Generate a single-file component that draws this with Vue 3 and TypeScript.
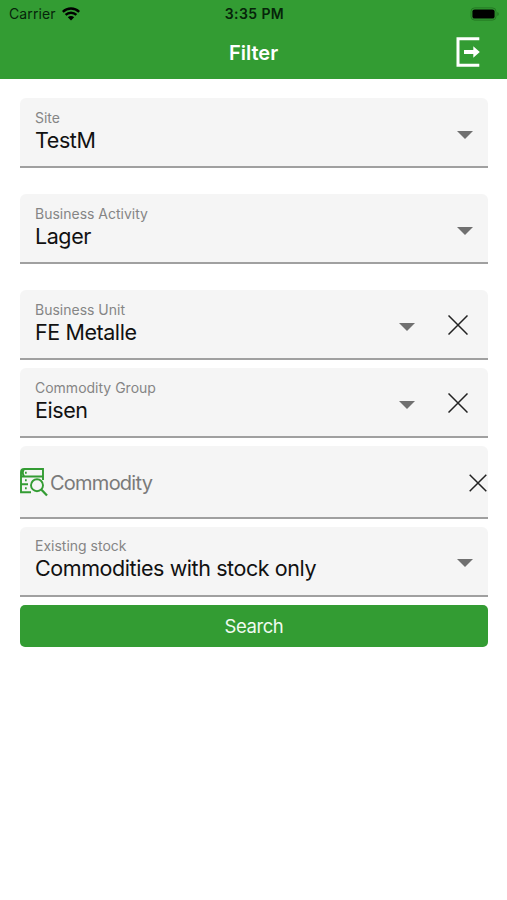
<script setup lang="ts">
interface Field {
  label: string
  value: string
  clearable: boolean
  kind: 'wide' | 'tight' | 'last'
}

const upperFields: Field[] = [
  { label: 'Site', value: 'TestM', clearable: false, kind: 'wide' },
  { label: 'Business Activity', value: 'Lager', clearable: false, kind: 'wide' },
  { label: 'Business Unit', value: 'FE Metalle', clearable: true, kind: 'tight' },
  { label: 'Commodity Group', value: 'Eisen', clearable: true, kind: 'tight' },
]
</script>

<template>
  <div class="screen">
    <header class="header">
      <div class="status">
        <div class="carrier">
          <span>Carrier</span>
          <svg class="wifi" viewBox="0 0 18 14" width="18" height="14">
            <path d="M.8 4.9A11.7 11.7 0 0 1 17.2 4.9" />
            <path d="M3.6 7.9A7.7 7.7 0 0 1 14.4 7.9" />
            <path class="solid" d="M5.8 10.3a4.6 4.6 0 0 1 6.4 0L9 13.6Z" />
          </svg>
        </div>
        <span class="time">3:35 PM</span>
        <div class="power">
          <svg viewBox="0 0 30 14" width="30" height="14">
            <rect x="1" y="0.9" width="25" height="12.2" rx="3.6" fill="none" stroke="#247823" stroke-width="1" />
            <rect x="2.4" y="2.4" width="22.2" height="9.2" rx="2.2" fill="#000" />
            <path d="M27.3 5v4q1.5-.6 1.5-2t-1.5-2Z" fill="#247823" />
          </svg>
        </div>
      </div>
      <div class="bar">
        <h1 class="title">Filter</h1>
        <button class="logout" type="button" aria-label="Log out">
          <svg viewBox="0 0 24 30" width="24" height="30">
            <path d="M23.3 1.7H2v26.6h21.3" fill="none" stroke="#fff" stroke-width="3" />
            <path d="M8 13.1h9.3V9.3L23.8 15l-6.5 5.7v-3.8H8Z" fill="#fff" />
          </svg>
        </button>
      </div>
    </header>

    <main class="form">
      <div v-for="field in upperFields" :key="field.label" class="field" :class="field.kind">
        <div class="text">
          <span class="label">{{ field.label }}</span>
          <span class="value">{{ field.value }}</span>
        </div>
        <svg class="caret" viewBox="0 0 16 8" width="16" height="8"><path d="M0 0h16L8 8Z" /></svg>
        <svg v-if="field.clearable" class="clear" viewBox="0 0 20 20" width="20" height="20">
          <path d="M.5.5l19 19M19.5.5l-19 19" />
        </svg>
      </div>

      <div class="field commodity">
        <svg class="lookup" viewBox="0 0 28 29" width="28" height="29">
          <path d="M11 24.3H1V4.2Q1 1 4.3 1H23v11M1 8.5h22M4.3 1Q1.2 4.7 4.3 8.5M1 16.2h7" />
          <circle cx="17" cy="17.2" r="6" />
          <path class="handle" d="M21.5 21.8l5.5 5.7" />
          <path class="marks" d="M5 4.7h1.7M5 12.3h1.7M5 20.3h1.7" />
        </svg>
        <span class="placeholder">Commodity</span>
        <svg class="clear small" viewBox="0 0 18 18" width="18" height="18">
          <path d="M.7.7l16.6 16.6M17.3.7L.7 17.3" />
        </svg>
      </div>

      <div class="field last">
        <div class="text">
          <span class="label">Existing stock</span>
          <span class="value">Commodities with stock only</span>
        </div>
        <svg class="caret" viewBox="0 0 16 8" width="16" height="8"><path d="M0 0h16L8 8Z" /></svg>
      </div>
      <button class="search" type="button">Search</button>
    </main>
  </div>
</template>

<style>
body {
  margin: 0;
  background: #fff;
}
</style>

<style scoped>
.screen {
  width: 100%;
  height: 900px;
  overflow: hidden;
  background: #fff;
  color: #111;
  font-family: Inter, "Liberation Sans", sans-serif;
}
.header {
  height: 79.4px;
  background: #339c33;
}
.status {
  display: grid;
  grid-template-columns: 1fr auto 1fr;
  align-items: center;
  height: 27px;
  padding: 0 7px 0 9px;
  color: #06240a;
  font-size: 14px;
}
.carrier {
  display: flex;
  align-items: center;
  gap: 6px;
  letter-spacing: 0.1px;
}
.wifi {
  fill: none;
  stroke: #000;
  stroke-width: 2.4;
}
.wifi .solid {
  fill: #000;
  stroke: none;
}
.time {
  font-weight: 600;
  letter-spacing: 0.4px;
}
.power {
  display: flex;
  justify-content: flex-end;
}
.bar {
  display: grid;
  grid-template-columns: 1fr auto 1fr;
  align-items: center;
  height: 50px;
  padding: 0 27.5px;
}
.title {
  grid-column: 2;
  margin: 0;
  padding-top: 1px;
  color: #fff;
  font-size: 20px;
  font-weight: 600;
}
.logout {
  justify-self: end;
  display: flex;
  padding: 0;
  border: 0;
  background: none;
}
.form {
  display: flex;
  flex-direction: column;
  padding: 19px 19.5px 0 20.4px;
}
.field {
  display: flex;
  align-items: center;
  box-sizing: border-box;
  height: 70px;
  padding: 0 14.5px 0 14.6px;
  border-bottom: 2px solid #a0a0a0;
  border-radius: 6px 6px 0 0;
  background: #f5f5f5;
}
.wide {
  margin-bottom: 26px;
}
.tight {
  margin-bottom: 8px;
}
.text {
  display: flex;
  flex: 1;
  flex-direction: column;
  padding-bottom: 2px;
}
.label {
  color: #858585;
  font-size: 14px;
  line-height: 18px;
}
.value {
  font-size: 21.5px;
  letter-spacing: -0.42px;
  line-height: 27px;
  white-space: nowrap;
}
.caret {
  margin-top: 5px;
  fill: #707070;
}
.clear {
  margin: 2px 5px 0 33.5px;
  fill: none;
  stroke: #222;
  stroke-width: 1.5;
}
.commodity {
  height: 72.5px;
  margin-bottom: 8px;
  padding: 0;
}
.lookup {
  margin-top: 1px;
  fill: none;
  stroke: #339c33;
  stroke-width: 1.9;
}
.lookup .handle {
  stroke-width: 2.3;
}
.placeholder {
  flex: 1;
  padding: 2px 0 0 1.6px;
  color: #7a7a7a;
  font-size: 20px;
  letter-spacing: -0.75px;
}
.clear.small {
  margin: 2px 1px 0 0;
}
.search {
  height: 42px;
  margin-top: 8px;
  padding: 1px 0 0;
  border: 0;
  border-radius: 5px;
  background: #339c33;
  color: #f0faf0;
  font-family: inherit;
  font-size: 18.5px;
  letter-spacing: -0.45px;
}
</style>
